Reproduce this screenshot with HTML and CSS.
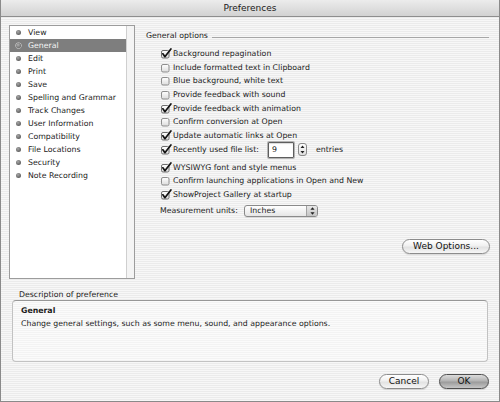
FILE: index.html
```html
<!DOCTYPE html>
<html>
<head>
<meta charset="utf-8">
<title>Preferences</title>
<link rel="stylesheet" href="styles.css">
</head>
<body>
<svg class="defs" width="0" height="0" aria-hidden="true">
  <defs>
    <linearGradient id="cbg" x1="0" y1="0" x2="0" y2="1">
      <stop offset="0" stop-color="#ffffff"/>
      <stop offset="1" stop-color="#dcdcdc"/>
    </linearGradient>
    <symbol id="cb-off" viewBox="0 0 11 11">
      <rect x="0.5" y="2.5" width="7.5" height="7.5" rx="1.5" fill="url(#cbg)" stroke="#8e8e8e"/>
    </symbol>
    <symbol id="cb-on" viewBox="0 0 11 11">
      <rect x="0.5" y="2.5" width="7.5" height="7.5" rx="1.5" fill="url(#cbg)" stroke="#6e6e6e"/>
      <path d="M1.9 5.8 L3.9 8.7 L9.9 1" fill="none" stroke="#111" stroke-width="1.7" stroke-linecap="round" stroke-linejoin="round"/>
    </symbol>
  </defs>
</svg>
<div class="window">
  <div class="titlebar">Preferences</div>
  <div class="content">
    <div class="top">
      <div class="listbox">
        <ul class="list">
          <li><span class="dot"></span>View</li>
          <li class="sel"><span class="dot"></span>General</li>
          <li><span class="dot"></span>Edit</li>
          <li><span class="dot"></span>Print</li>
          <li><span class="dot"></span>Save</li>
          <li><span class="dot"></span>Spelling and Grammar</li>
          <li><span class="dot"></span>Track Changes</li>
          <li><span class="dot"></span>User Information</li>
          <li><span class="dot"></span>Compatibility</li>
          <li><span class="dot"></span>File Locations</li>
          <li><span class="dot"></span>Security</li>
          <li><span class="dot"></span>Note Recording</li>
        </ul>
        <div class="track"></div>
      </div>
      <div class="pane">
        <div class="group-head"><span>General options</span><span class="rule"></span></div>
        <div class="opts">
          <div class="opt"><svg class="cb"><use href="#cb-on"/></svg>Background repagination</div>
          <div class="opt"><svg class="cb"><use href="#cb-off"/></svg>Include formatted text in Clipboard</div>
          <div class="opt"><svg class="cb"><use href="#cb-off"/></svg>Blue background, white text</div>
          <div class="opt"><svg class="cb"><use href="#cb-off"/></svg>Provide feedback with sound</div>
          <div class="opt"><svg class="cb"><use href="#cb-on"/></svg>Provide feedback with animation</div>
          <div class="opt"><svg class="cb"><use href="#cb-off"/></svg>Confirm conversion at Open</div>
          <div class="opt"><svg class="cb"><use href="#cb-on"/></svg>Update automatic links at Open</div>
          <div class="opt recent">
            <svg class="cb"><use href="#cb-on"/></svg>
            <span class="recent-label">Recently used file list:</span>
            <span class="field">9</span>
            <span class="stepper">
              <svg width="5" height="9" viewBox="0 0 5 9"><path d="M2.5 0.5 L4.5 3 L0.5 3 Z M2.5 8.5 L4.5 6 L0.5 6 Z" fill="#222"/></svg>
            </span>
            <span class="entries">entries</span>
          </div>
          <div class="opt"><svg class="cb"><use href="#cb-on"/></svg>WYSIWYG font and style menus</div>
          <div class="opt"><svg class="cb"><use href="#cb-off"/></svg>Confirm launching applications in Open and New</div>
          <div class="opt"><svg class="cb"><use href="#cb-on"/></svg>ShowProject Gallery at startup</div>
          <div class="measure">
            <span class="measure-label">Measurement units:</span>
            <span class="popup"><span class="popup-text">Inches</span><span class="popup-arrows"><svg width="5" height="8" viewBox="0 0 5 8"><path d="M2.5 0.3 L4.6 2.8 L0.4 2.8 Z M2.5 7.7 L4.6 5.2 L0.4 5.2 Z" fill="#222"/></svg></span></span>
          </div>
        </div>
        <div class="web-row"><button class="btn web">Web Options...</button></div>
      </div>
    </div>
    <div class="desc">
      <div class="desc-label">Description of preference</div>
      <div class="desc-box">
        <div class="desc-title">General</div>
        <div>Change general settings, such as some menu, sound, and appearance options.</div>
      </div>
    </div>
    <div class="buttons">
      <button class="btn">Cancel</button>
      <button class="btn default">OK</button>
    </div>
  </div>
</div>
</body>
</html>
```

FILE: styles.css
```css
* { box-sizing: border-box; margin: 0; padding: 0; }

body {
  width: 500px;
  height: 402px;
  overflow: hidden;
  font-family: "DejaVu Sans", "Liberation Sans", sans-serif;
  font-size: 7.8px;
  color: #1c1c1c;
  background: #ffffff;
}

.defs { position: absolute; width: 0; height: 0; overflow: hidden; }

.window {
  width: 500px;
  height: 402px;
  border: 1px solid #8a8a8a;
  border-top: none;
  display: flex;
  flex-direction: column;
  background: repeating-linear-gradient(to bottom, #f7f7f7 0, #f7f7f7 1px, #ebebeb 1px, #ebebeb 2px);
}

.titlebar {
  height: 17px;
  flex: none;
  border-bottom: 1px solid #8e8e8e;
  background: linear-gradient(to bottom, #ececec, #d2d2d2);
  text-align: center;
  font-size: 9px;
  line-height: 16px;
  color: #1a1a1a;
}

.content {
  flex: 1;
  display: flex;
  flex-direction: column;
  padding: 8px 9px 0 8px;
}

.top {
  display: flex;
  height: 254px;
  flex: none;
}

/* list */
.listbox {
  width: 126px;
  height: 254px;
  border: 1px solid #9c9c9c;
  background: #ffffff;
  display: flex;
  flex: none;
}

.list {
  list-style: none;
  flex: 1;
}

.list li {
  height: 13px;
  line-height: 13px;
  display: flex;
  align-items: center;
  padding-left: 6px;
  color: #222;
}

.list li.sel {
  background: #7e7e7e;
  color: #f6f6f6;
}

.dot {
  width: 5px;
  height: 5px;
  border-radius: 50%;
  margin-right: 7px;
  flex: none;
  background: radial-gradient(circle at 40% 35%, #a8a8a8, #575757 80%);
}

.sel .dot {
  background: radial-gradient(circle at 40% 35%, #b0b0b0, #6a6a6a 80%);
  box-shadow: 0 0 0 0.6px #d8d8d8;
}

.track {
  width: 8px;
  flex: none;
  border-left: 1px solid #cfcfcf;
  background: #f4f4f4;
}

/* right pane */
.pane {
  flex: 1;
  margin-left: 11px;
  padding-top: 3.5px;
  display: flex;
  flex-direction: column;
}

.group-head {
  display: flex;
  align-items: center;
  height: 13px;
  line-height: 13px;
}

.rule {
  flex: 1;
  height: 0;
  border-top: 1px solid #a6a6a6;
  margin: 4px 1px 0 4px;
}

.opts {
  margin-top: 5px;
  padding-left: 14.5px;
  display: flex;
  flex-direction: column;
}

.opt {
  height: 13.7px;
  display: flex;
  align-items: center;
  white-space: nowrap;
}

.cb {
  width: 11px;
  height: 11px;
  flex: none;
  margin-right: 1.5px;
}

.opt.recent {
  height: 17px;
  margin: -1px 0 2px;
}

.recent-label {
  width: 95px;
  flex: none;
}

.field {
  width: 26px;
  height: 16px;
  border: 1px solid #5e5e5e;
  box-shadow: 0 0 0 1px #b4b4b4, inset 0 1px 1px rgba(0,0,0,0.15);
  border-radius: 1px;
  background: #ffffff;
  padding-left: 3px;
  line-height: 14px;
  color: #111;
}

.stepper {
  width: 9px;
  height: 13px;
  margin-left: 4px;
  border: 1px solid #8a8a8a;
  border-radius: 3px;
  background: linear-gradient(to bottom, #ffffff, #dedede);
  display: flex;
  align-items: center;
  justify-content: center;
}

.entries {
  margin-left: 9px;
}

.measure {
  height: 15px;
  margin-top: 2px;
  margin-left: -0.5px;
  display: flex;
  align-items: center;
}

.measure-label {
  width: 84px;
  flex: none;
}

.popup {
  width: 74px;
  height: 12px;
  border: 1px solid #8a8a8a;
  border-radius: 3px;
  background: linear-gradient(to bottom, #ffffff, #e6e6e6);
  display: flex;
  box-shadow: 0 1px 0 rgba(0,0,0,0.08);
}

.popup-text {
  flex: 1;
  padding-left: 5px;
  line-height: 10px;
}

.popup-arrows {
  width: 11px;
  border-left: 1px solid #a2a2a2;
  border-radius: 0 2px 2px 0;
  background: linear-gradient(to bottom, #e8e8e8, #c4c4c4);
  display: flex;
  align-items: center;
  justify-content: center;
}

.web-row {
  margin-top: 20.5px;
  display: flex;
  justify-content: flex-end;
}

/* buttons */
.btn {
  height: 15px;
  border: 1px solid #8c8c8c;
  border-radius: 8px;
  background: linear-gradient(to bottom, #ffffff 0%, #f0f0f0 45%, #e2e2e2 55%, #f6f6f6 100%);
  font-family: "DejaVu Sans", "Liberation Sans", sans-serif;
  font-size: 9px;
  line-height: 13px;
  color: #111;
  text-align: center;
  box-shadow: 0 1px 1px rgba(0,0,0,0.12);
}

.btn.web {
  width: 88px;
}

.btn.default {
  border-color: #4e4e4e;
  background: linear-gradient(to bottom, #dcdcdc 0%, #b4b4b4 45%, #9c9c9c 55%, #c6c6c6 100%);
}

/* description */
.desc {
  margin-top: 9.5px;
  display: flex;
  flex-direction: column;
}

.desc-label {
  height: 11px;
  line-height: 11px;
  padding-left: 10px;
}

.desc-box {
  margin-left: 3px;
  width: 476px;
  height: 62px;
  border: 1px solid #c2c2c2;
  border-top-color: #979797;
  border-radius: 4px;
  background: repeating-linear-gradient(to bottom, #fbfbfb 0, #fbfbfb 1px, #f3f3f3 1px, #f3f3f3 2px);
  padding: 3px 0 0 8px;
  line-height: 13px;
}

.desc-title {
  font-weight: bold;
}

.buttons {
  margin-top: 12px;
  margin-right: 1px;
  display: flex;
  justify-content: flex-end;
  gap: 10px;
}

.buttons .btn {
  width: 50px;
}
```
